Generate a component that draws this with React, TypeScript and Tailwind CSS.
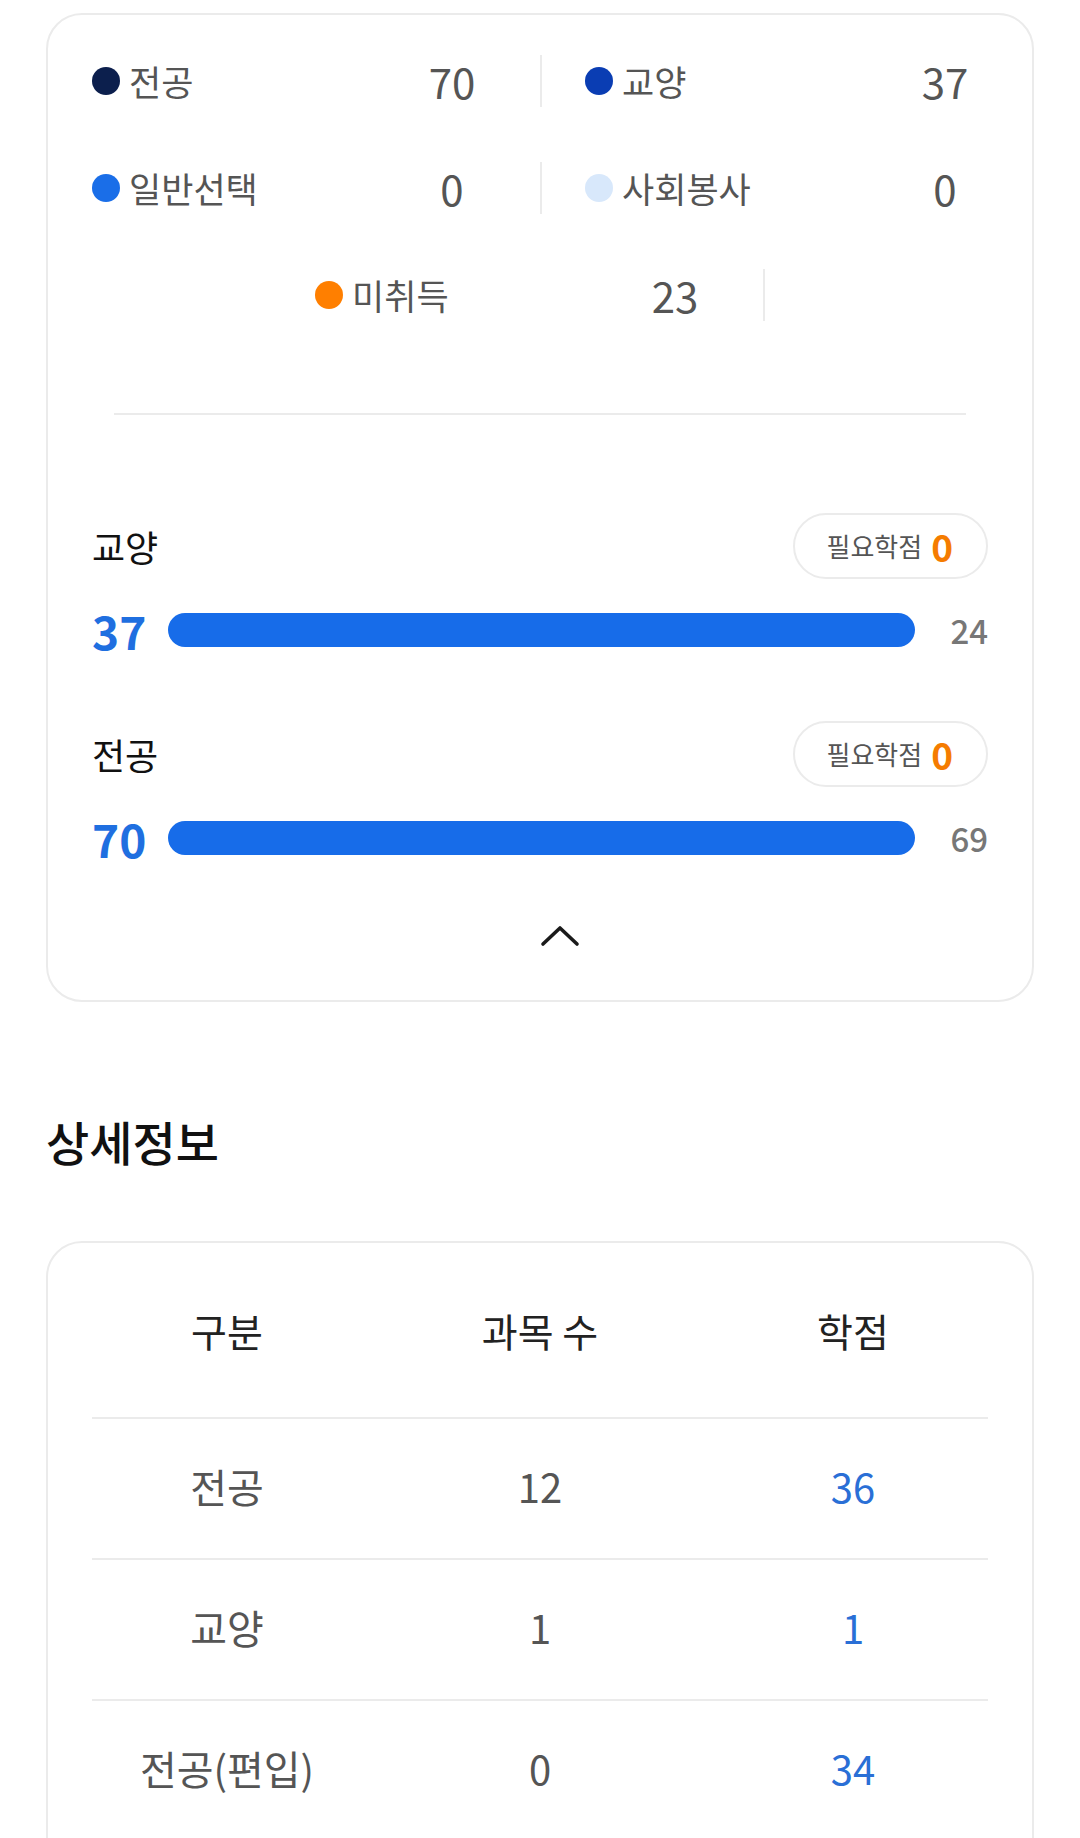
import React from "react";

const FONT = { fontFamily: '"Noto Sans CJK KR", "Noto Sans", sans-serif' };

type Stat = { label: string; value: number; color: string; divider?: boolean };

function StatItem({ s }: { s: Stat }) {
  return (
    <div className="flex items-center">
      <div className="flex w-[448px] items-center">
        <span className={`h-[28px] w-[28px] shrink-0 rounded-full ${s.color}`} />
        <span className="ml-[9px] flex-1 text-[35px] leading-none text-[#555555]">{s.label}</span>
        <span className="w-[100px] text-center text-[42px] leading-none text-[#555555]">{s.value}</span>
        <span className="w-[38px]" />
      </div>
      {s.divider !== false ? <span className="h-[52px] w-[2px] bg-[#ebebeb]" /> : <span className="w-[2px]" />}
    </div>
  );
}

function Badge() {
  return (
    <div className="flex h-[66px] items-center rounded-full border-2 border-[#ebebeb] pl-[31px] pr-[33px]">
      <span className="text-[26px] leading-none text-[#555555]">필요학점</span>
      <span className="ml-[9px] text-[37px] font-bold leading-none text-[#f57c00]">0</span>
    </div>
  );
}

function BarSection({ title, value, total, top }: { title: string; value: number; total: number; top: string }) {
  return (
    <div className={top}>
      <div className="flex h-[66px] items-center justify-between">
        <span className="text-[36px] leading-none text-[#111111]">{title}</span>
        <Badge />
      </div>
      <div className="mt-[26px] flex h-[50px] items-center">
        <span className="w-[76px] text-[46px] font-bold leading-none text-[#1f6fe0]">{value}</span>
        <div className="h-[34px] flex-1 rounded-full bg-[#176ce9]" />
        <span className="w-[73px] text-right text-[33px] font-medium leading-none text-[#777777]">{total}</span>
      </div>
    </div>
  );
}

export default function App() {
  const row1: Stat[] = [
    { label: "전공", value: 70, color: "bg-[#0c1f4d]" },
    { label: "교양", value: 37, color: "bg-[#0a3db3]", divider: false },
  ];
  const row2: Stat[] = [
    { label: "일반선택", value: 0, color: "bg-[#1a6ee8]" },
    { label: "사회봉사", value: 0, color: "bg-[#d8e8fb]", divider: false },
  ];
  const rows = [
    { k: "전공", n: "12", c: "36" },
    { k: "교양", n: "1", c: "1" },
    { k: "전공(편입)", n: "0", c: "34" },
  ];
  return (
    <div className="min-h-[1838px] w-[1080px] overflow-hidden bg-white" style={FONT}>
      <div className="mx-[46px] mt-[13px] rounded-[36px] border-2 border-[#ebebeb] px-[44px] pb-[53px] pt-[12px]">
        <div className="flex h-[107px] items-center gap-x-[43px]">
          {row1.map((s) => (
            <StatItem key={s.label} s={s} />
          ))}
        </div>
        <div className="flex h-[107px] items-center gap-x-[43px]">
          {row2.map((s) => (
            <StatItem key={s.label} s={s} />
          ))}
        </div>
        <div className="flex h-[107px] items-center justify-center">
          <StatItem s={{ label: "미취득", value: 23, color: "bg-[#ff7f00]" }} />
        </div>
        <div className="mx-[22px] mt-[65px] h-[2px] bg-[#ebebeb]" />
        <BarSection title="교양" value={37} total={24} top="mt-[98px]" />
        <BarSection title="전공" value={70} total={69} top="mt-[66px]" />
        <div className="mt-[62px] flex justify-center">
          <svg className="ml-[40px]" width="40" height="22" viewBox="0 0 40 22" fill="none">
            <polyline points="3,19 20,3 37,19" stroke="#1a1a1a" strokeWidth="3.6" strokeLinecap="round" strokeLinejoin="round" />
          </svg>
        </div>
      </div>

      <h2 className="ml-[46px] mt-[113px] text-[47px] font-medium leading-[52px] text-[#111111]">상세정보</h2>

      <div className="mx-[46px] mt-[74px] rounded-[36px] border-2 border-[#ebebeb] px-[44px] pb-[40px]">
        <div className="grid h-[174px] grid-cols-[270px_1fr_270px] items-center text-center text-[39px] leading-none text-[#222222]">
          <span>구분</span>
          <span>과목 수</span>
          <span>학점</span>
        </div>
        {rows.map((r) => (
          <div
            key={r.k}
            className="grid h-[141px] grid-cols-[270px_1fr_270px] items-center border-t-2 border-[#ebebeb] pb-[5px] text-center text-[40px] leading-none"
          >
            <span className="text-[#555555]">{r.k}</span>
            <span className="text-[#555555]">{r.n}</span>
            <span className="text-[#2a6fd6]">{r.c}</span>
          </div>
        ))}
      </div>
    </div>
  );
}
